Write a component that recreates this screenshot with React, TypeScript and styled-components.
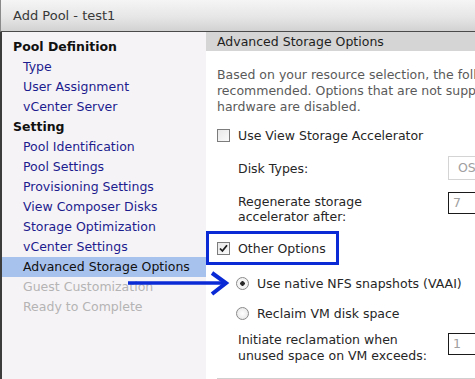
import React from 'react'
import styled, { createGlobalStyle } from 'styled-components'

const palette = {
  frame: '#3c3c3c',
  nav: '#f6f3f6',
  navLink: '#1c1c8e',
  navMuted: '#b4b4b4',
  selected: '#a8c2ee',
  header: '#d5d5d5',
  text: '#262626',
  muted: '#5a5a5a',
  callout: '#0a2ad6',
}

const GlobalStyle = createGlobalStyle`
  html, body {
    margin: 0;
    padding: 0;
    background: #ffffff;
  }

  body {
    font-family: 'DejaVu Sans', Verdana, sans-serif;
    font-size: 12.5px;
    color: ${palette.text};
  }
`

const Window = styled.div`
  height: 379px;
  overflow: hidden;
  position: relative;
  width: 475px;
  display: flex;
  flex-direction: column;
`

const TitleBar = styled.div`
  align-items: center;
  background: linear-gradient(#f5f5f5, #e6e6e6 55%, #d2d2d2);
  border-bottom: 1px solid #4a4a4a;
  border-left: 1px solid #8a8a8a;
  box-sizing: border-box;
  color: #383838;
  display: flex;
  font-size: 13px;
  height: 32px;
  padding: 0 0 1px 12px;
`

const Body = styled.div`
  border-left: 2px solid ${palette.frame};
  display: flex;
  flex: 1;
  min-height: 0;
`

const Nav = styled.nav`
  background: ${palette.nav};
  box-sizing: border-box;
  display: flex;
  flex-direction: column;
  padding-top: 5px;
  width: 204px;
`

type TNavItem = {
  kind: 'group' | 'link' | 'muted'
  active?: boolean
}

const NavItem = styled.div<TNavItem>`
  background: ${({ active }) => active ? palette.selected : 'transparent'};
  color: ${({ kind, active }) => active ? '#111' : kind === 'group' ? '#111' : kind === 'muted' ? palette.navMuted : palette.navLink};
  font-weight: ${({ kind }) => kind === 'group' ? 'bold' : 'normal'};
  height: 20px;
  line-height: 20px;
  padding-left: ${({ kind }) => kind === 'group' ? '11px' : '21px'};
  white-space: nowrap;
`

const Main = styled.main`
  background: #ffffff;
  display: flex;
  flex: 1;
  flex-direction: column;
  min-width: 0;
  overflow: hidden;
`

const SectionHeader = styled.div`
  background: ${palette.header};
  color: #1e1e1e;
  height: 19px;
  line-height: 19px;
  padding-left: 11px;
  white-space: nowrap;
`

const Content = styled.div`
  display: flex;
  flex-direction: column;
  padding: 16px 0 0 11px;
`

const Intro = styled.p`
  color: ${palette.muted};
  line-height: 16px;
  margin: 0;
  white-space: nowrap;
`

type TRow = {
  gap: number
  indent?: number
  top?: boolean
}

const Row = styled.div<TRow>`
  align-items: ${({ top }) => top ? 'flex-start' : 'center'};
  display: flex;
  margin-top: ${({ gap }) => gap}px;
  min-height: 20px;
  padding-left: ${({ indent = 0 }) => indent}px;
  white-space: nowrap;
`

const Callout = styled.div`
  align-items: center;
  align-self: flex-start;
  border: 3px solid ${palette.callout};
  box-sizing: border-box;
  display: flex;
  height: 34px;
  margin: 7px 0 0 -11px;
  padding: 0 10px 0 8px;
  white-space: nowrap;
`

const Box = styled.span`
  background: linear-gradient(135deg, #e8e8e8, #fafafa);
  border: 1px solid #7c7c7c;
  box-sizing: border-box;
  display: inline-flex;
  flex: none;
  height: 13px;
  margin-right: 8px;
  width: 13px;
  align-items: center;
  justify-content: center;
`

const Radio = styled.span<{ checked?: boolean }>`
  background: radial-gradient(circle, ${({ checked }) => checked ? '#2a2a2a 0 2px, #f4f4f4 2.5px' : '#ffffff, #e2e2e2'});
  border: 1px solid #8a8a8a;
  border-radius: 50%;
  box-sizing: border-box;
  flex: none;
  height: 13px;
  margin-right: 8px;
  width: 13px;
`

type TFieldLabel = {
  lineHeight?: number
  offset?: number
}

const FieldLabel = styled.div<TFieldLabel>`
  flex: none;
  line-height: ${({ lineHeight = 15 }) => lineHeight}px;
  padding-top: ${({ offset = 0 }) => offset}px;
  width: 210px;
`

type TField = {
  disabled?: boolean
  offset?: number
}

const Field = styled.div<TField>`
  border: 1px solid ${({ disabled }) => disabled ? '#d4d4d4' : '#1a1a1a'};
  box-sizing: border-box;
  color: #a0a0a0;
  flex: none;
  height: ${({ disabled }) => disabled ? 24 : 22}px;
  line-height: ${({ disabled }) => disabled ? 22 : 20}px;
  margin-top: ${({ offset = 0 }) => offset}px;
  padding-left: ${({ disabled }) => disabled ? 9 : 4}px;
  width: 80px;
`

const Divider = styled.div`
  border-top: 1px solid #cfcfcf;
  margin-top: 14px;
`

const Pointer = styled.svg`
  left: 128px;
  pointer-events: none;
  position: absolute;
  top: 271px;
`

const navItems: Array<{ text: string } & TNavItem> = [
  { text: 'Pool Definition', kind: 'group' },
  { text: 'Type', kind: 'link' },
  { text: 'User Assignment', kind: 'link' },
  { text: 'vCenter Server', kind: 'link' },
  { text: 'Setting', kind: 'group' },
  { text: 'Pool Identification', kind: 'link' },
  { text: 'Pool Settings', kind: 'link' },
  { text: 'Provisioning Settings', kind: 'link' },
  { text: 'View Composer Disks', kind: 'link' },
  { text: 'Storage Optimization', kind: 'link' },
  { text: 'vCenter Settings', kind: 'link' },
  { text: 'Advanced Storage Options', kind: 'link', active: true },
  { text: 'Guest Customization', kind: 'muted' },
  { text: 'Ready to Complete', kind: 'muted' },
]

const Check = () => (
  <svg width="9" height="9" viewBox="0 0 9 9">
    <path d="M1 4.5 L3.4 7 L8 1.2" fill="none" stroke="#1a1a1a" strokeWidth="1.8" />
  </svg>
)

const App = () => (
  <>
    <GlobalStyle />
    <Window>
      <TitleBar>Add Pool - test1</TitleBar>
      <Body>
        <Nav>
          { navItems.map(({ text, kind, active }) => (
            <NavItem key={text} kind={kind} active={active}>{text}</NavItem>
          )) }
        </Nav>
        <Main>
          <SectionHeader>Advanced Storage Options</SectionHeader>
          <Content>
            <Intro>
              Based on your resource selection, the following options are<br />
              recommended. Options that are not supported by the selected<br />
              hardware are disabled.
            </Intro>

            <Row gap={10}>
              <Box />
              Use View Storage Accelerator
            </Row>

            <Row gap={11} indent={21}>
              <FieldLabel>Disk Types:</FieldLabel>
              <Field disabled>OS disks</Field>
            </Row>

            <Row gap={12} indent={21} top>
              <FieldLabel offset={2}>Regenerate storage<br />accelerator after:</FieldLabel>
              <Field>7</Field>
            </Row>

            <Callout>
              <Box><Check /></Box>
              Other Options
            </Callout>

            <Row gap={8} indent={19}>
              <Radio checked />
              Use native NFS snapshots (VAAI)
            </Row>

            <Row gap={10} indent={19}>
              <Radio />
              Reclaim VM disk space
            </Row>

            <Row gap={9} indent={21} top>
              <FieldLabel lineHeight={16}>Initiate reclamation when<br />unused space on VM exceeds:</FieldLabel>
              <Field offset={1}>1</Field>
            </Row>

            <Divider />
          </Content>
        </Main>
      </Body>

      <Pointer width="102" height="26" viewBox="0 0 102 26">
        <path d="M0 12 H96" stroke={palette.callout} strokeWidth="3.5" />
        <path d="M84 2 L98 12 L84 23" fill="none" stroke={palette.callout} strokeWidth="4" />
      </Pointer>
    </Window>
  </>
)

export default App
